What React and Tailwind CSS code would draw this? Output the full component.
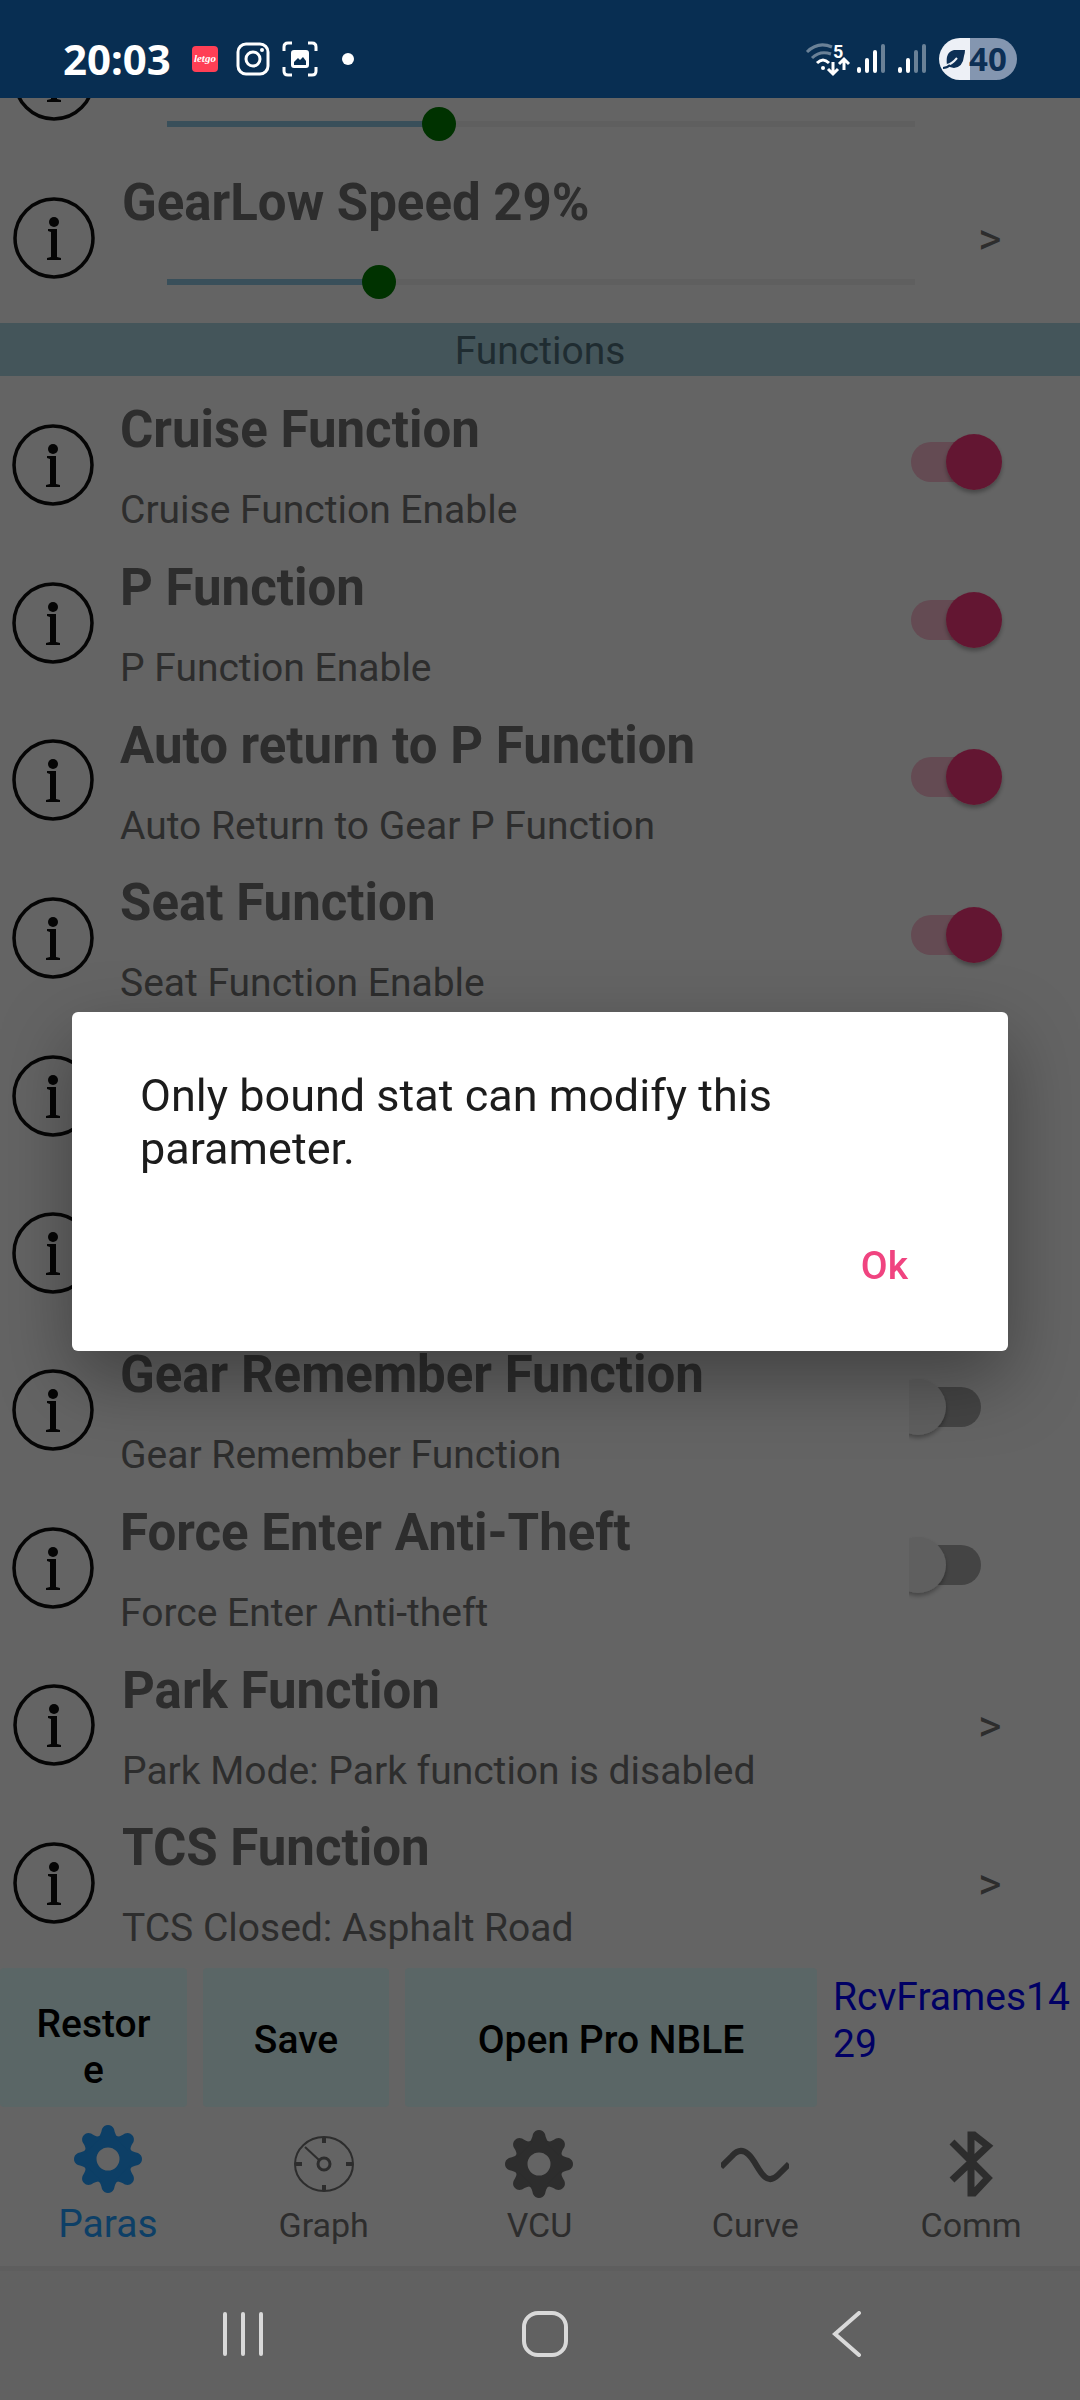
import React, { useState } from 'react';

const functions = [
  { title: 'Cruise Function', detail: 'Cruise Function Enable', on: true },
  { title: 'P Function', detail: 'P Function Enable', on: true },
  { title: 'Auto return to P Function', detail: 'Auto Return to Gear P Function', on: true },
  { title: 'Seat Function', detail: 'Seat Function Enable', on: true },
  { blank: true },
  { blank: true },
  { title: 'Gear Remember Function', detail: 'Gear Remember Function', on: false },
  { title: 'Force Enter Anti-Theft', detail: 'Force Enter Anti-theft', on: false },
  { title: 'Park Function', detail: 'Park Mode: Park function is disabled', link: true },
  { title: 'TCS Function', detail: 'TCS Closed: Asphalt Road', link: true },
];

function InfoIcon() {
  return (
    <svg viewBox="0 0 82 82" className="w-[82px] h-[82px]" fill="none">
      <circle cx="41" cy="41" r="39" stroke="#050505" strokeWidth="3.500" />
      <circle cx="41" cy="25" r="5" fill="#050505" />
      <path d="M35 32h9v28l4 1v2H34v-2l4-1V35l-3-1z" fill="#050505" />
    </svg>
  );
}

function Row({ title, children, right, wide }) {
  return (
    <div className="flex-1 min-h-[157px] flex">
      <div className={wide ? 'w-[122px] shrink-0 pl-[13px] flex items-center' : 'w-[120px] shrink-0 pl-3 flex items-center'}>
        <button type="button" aria-label="Info"><InfoIcon /></button>
      </div>
      <div className="flex-1 pt-[14px]">
        <h2 className="h-[60px] text-[51px] leading-[60px] font-bold whitespace-nowrap">{title}</h2>
        {children}
      </div>
      {right}
    </div>
  );
}

function Arrow() {
  return (
    <button type="button" aria-label="Open" className="w-[102px] text-left text-[45px] leading-[48px] pt-0.5">
      &gt;
    </button>
  );
}

function Speed({ value, onChange, label }) {
  const fill = ((value - 1) / 99) * 100;
  return (
    <div className="grid items-center h-[34px] mt-8 ml-7 mr-[46px]">
      <div className="[grid-area:1/1] mx-[17px] h-1.5 bg-[#5f5f5f]">
        <div className="h-full bg-[#394f5a]" style={{ width: `${fill}%` }} />
      </div>
      <input
        type="range"
        min="1"
        max="100"
        aria-label={label}
        value={value}
        onChange={(e) => onChange(Number(e.target.value))}
        className="[grid-area:1/1] w-full h-[34px] appearance-none bg-transparent [&::-webkit-slider-thumb]:appearance-none [&::-webkit-slider-thumb]:w-[34px] [&::-webkit-slider-thumb]:h-[34px] [&::-webkit-slider-thumb]:rounded-full [&::-webkit-slider-thumb]:bg-[#003200]"
      />
    </div>
  );
}

function Switch({ label, defaultOn }) {
  const [on, setOn] = useState(defaultOn);
  return (
    <label className="w-[171px] shrink-0 flex items-center pb-1.5">
      <input
        type="checkbox"
        role="switch"
        aria-label={label}
        checked={on}
        onChange={() => setOn(!on)}
        className="peer sr-only"
      />
      <svg viewBox="0 0 100 76" className="w-[100px] h-[76px] overflow-hidden">
        <defs>
          <filter id="knob" x="-30%" y="-30%" width="160%" height="160%">
            <feDropShadow dx="0" dy="3" stdDeviation="2" floodColor="#000" floodOpacity="0.3" />
          </filter>
        </defs>
        <rect x="2" y="18" width={on ? 80 : 70} height="40" rx="20" fill={on ? '#644b53' : '#444444'} />
        <circle cx={on ? 65 : 9} cy="38" r="28" fill={on ? '#641932' : '#5f5f5f'} filter="url(#knob)" />
      </svg>
    </label>
  );
}

const teeth = [0, 45, 90, 135, 180, 225, 270, 315];

function Gear() {
  return (
    <svg viewBox="-34 -34 68 68" className="w-[68px] h-[68px]" fill="currentColor">
      <circle r="18" fill="none" stroke="currentColor" strokeWidth="13" />
      {teeth.map((angle) => (
        <path key={angle} d="M-11-20Q-7-24-6-30Q-4-34 0-34Q4-34 6-30Q7-24 11-20Z" transform={`rotate(${angle})`} />
      ))}
    </svg>
  );
}

function Gauge() {
  return (
    <svg viewBox="0 0 68 68" className="w-[68px] h-[68px]" fill="none" stroke="currentColor" strokeWidth="2">
      <ellipse cx="34" cy="34" rx="29" ry="27" />
      <circle cx="34" cy="34" r="6" strokeWidth="3" />
      <path d="M29 30L15 17" />
      <path d="M34 7v6M34 55v6M6 34h6M56 34h6" strokeWidth="4" />
    </svg>
  );
}

function Wave() {
  return (
    <svg viewBox="0 0 68 68" className="w-[68px] h-[68px]" fill="none" stroke="currentColor" strokeWidth="6">
      <path d="M0 37L11 26Q19 17 27 24C34 30 37 41 44 47Q50 52 57 45L68 34" />
    </svg>
  );
}

function Bluetooth() {
  return (
    <svg viewBox="0 0 68 68" className="w-[68px] h-[68px]" fill="none" stroke="currentColor" strokeWidth="7">
      <path d="M15 12L51 48L37 63L34 63V5H37L51 16L15 50" />
    </svg>
  );
}

const tabs = [
  { name: 'Paras', icon: Gear },
  { name: 'Graph', icon: Gauge },
  { name: 'VCU', icon: Gear },
  { name: 'Curve', icon: Wave },
  { name: 'Comm', icon: Bluetooth },
];

function StatusBar() {
  return (
    <header className="relative z-10 h-[98px] shrink-0 bg-[#082e52] text-white flex items-center justify-between px-[63px] pt-5">
      <div className="flex items-center">
        <span className="font-['Noto_Sans',sans-serif] font-bold text-[42px] leading-10 mr-[21px]">20:03</span>
        <span className="w-[26px] h-[26px] mr-[18px] rounded bg-[#ff3f55] font-['Liberation_Serif',serif] italic font-bold text-[11px] leading-[24px] text-center">letgo</span>
        <svg viewBox="0 0 34 34" className="w-[34px] h-[34px] mr-3" fill="none" stroke="currentColor" strokeWidth="3">
          <rect x="2" y="2" width="30" height="30" rx="8" />
          <circle cx="17" cy="17" r="7" />
          <circle cx="26" cy="8" r="2" fill="currentColor" stroke="none" />
        </svg>
        <svg viewBox="0 0 36 36" className="w-9 h-9 mr-6" fill="none" stroke="currentColor" strokeWidth="3">
          <path d="M2 10V6q0-4 4-4h4M26 2h4q4 0 4 4v4M34 26v4q0 4-4 4h-4M10 34H6q-4 0-4-4v-4" />
          <path fillRule="evenodd" fill="currentColor" stroke="none" d="M12 9h12q3 0 3 3v12q0 3-3 3H12q-3 0-3-3V12q0-3 3-3ZM12 24h12v-4l-3-4-3 3-2-2-4 4Z" />
        </svg>
        <span className="w-3 h-3 rounded-full bg-white" />
      </div>
      <div className="flex items-center">
        <svg viewBox="0 0 44 34" className="w-11 h-[34px] mr-2 overflow-visible" fill="none" stroke="currentColor" strokeWidth="3">
          <path d="M2 10Q13-1 27 5M7 16Q15 8 26 12" opacity=".4" />
          <path d="M12 21Q18 15 24 21" />
          <circle cx="18" cy="26" r="2" fill="currentColor" stroke="none" />
          <text x="28" y="16" fontSize="18" fontWeight="700" fill="currentColor" stroke="none">5</text>
          <path d="M28 20v11M23 27l5 5 5-5M39 28V18M34 22l5-5 5 5" />
        </svg>
        <svg viewBox="0 0 28 32" className="w-7 h-8 mr-[13px]" fill="none" stroke="currentColor" strokeWidth="4" strokeLinecap="round">
          <path d="M2 26v2M10 17v11M18 9v19" />
          <path d="M26 3v25" opacity=".4" />
        </svg>
        <svg viewBox="0 0 28 32" className="w-7 h-8 mr-[13px]" fill="none" stroke="currentColor" strokeWidth="4" strokeLinecap="round">
          <path d="M2 26v2M10 17v11" />
          <path d="M18 9v19M26 3v25" opacity=".4" />
        </svg>
        <div className="w-[78px] h-[42px] rounded-full flex items-center bg-linear-to-r from-[#edf0f6] from-40% to-[#8496b0] to-40% text-[#0d2f55]">
          <svg viewBox="0 0 22 20" className="w-[22px] h-5 ml-1">
            <path d="M4 16Q2 3 11 1h11q0 3-1 6-1 11-10 12-4 0-7-3Z" fill="currentColor" />
            <path d="M4 16Q9 15 14 9" stroke="#edf0f6" strokeWidth="2" fill="none" />
            <path d="M0 19q4 0 7-3" stroke="currentColor" strokeWidth="2" fill="none" />
          </svg>
          <span className="ml-1 font-['Noto_Sans',sans-serif] font-bold text-[33px] leading-[42px]">40</span>
        </div>
      </div>
    </header>
  );
}

function SystemNav() {
  return (
    <nav className="h-[134px] shrink-0 bg-[#616161] border-t-[5px] border-[#5e5e5e] text-[#d9d9d9] pl-[92px] pr-[82px] pb-1 grid grid-cols-3 items-center justify-items-center">
      <button type="button" aria-label="Recent apps">
        <svg viewBox="0 0 44 46" className="w-11 h-[46px]" stroke="currentColor" strokeWidth="4" strokeLinecap="round">
          <path d="M4 3v40M22 3v40M40 3v40" />
        </svg>
      </button>
      <button type="button" aria-label="Home">
        <svg viewBox="0 0 46 46" className="w-[46px] h-[46px]" fill="none" stroke="currentColor" strokeWidth="4">
          <rect x="2" y="2" width="42" height="42" rx="14" />
        </svg>
      </button>
      <button type="button" aria-label="Back">
        <svg viewBox="0 0 30 46" className="w-[30px] h-[46px]" fill="none" stroke="currentColor" strokeWidth="4" strokeLinecap="round">
          <path d="M27 2L3 23L27 44" />
        </svg>
      </button>
    </nav>
  );
}

function Dialog({ onClose }) {
  return (
    <div className="fixed inset-0 z-20 px-[72px] pt-[98px] pb-[136px] flex items-center">
      <div role="alertdialog" aria-describedby="message" className="w-full rounded-md bg-white shadow-[0_28px_72px_rgba(0,0,0,0.35)] px-[68px] pt-[57px] pb-[61px]">
        <p id="message" className="text-[45px] leading-[53px] text-[#1c1c1c] max-w-[700px]">
          Only bound stat can modify this parameter.
        </p>
        <div className="mt-[67px] flex justify-end pr-8">
          <button type="button" onClick={onClose} className="text-[39px] leading-[48px] font-medium text-[#f04480]">Ok</button>
        </div>
      </div>
    </div>
  );
}

function App() {
  const [speeds, setSpeeds] = useState([37, 29]);
  const [dialogOpen, setDialogOpen] = useState(true);

  return (
    <div className="min-h-screen flex flex-col overflow-hidden bg-[#646464] text-[#2d2d2d] font-[Roboto,sans-serif]">
      <StatusBar />

      {/* --- PARAMETER LIST --- */}
      <main className="flex-1 flex flex-col -mt-[97px] pb-1.5">
        <div className="flex flex-col h-[316px]">
          <Row wide right={<div className="w-[102px]" />}>
            <Speed label="Speed" value={speeds[0]} onChange={(v) => setSpeeds([v, speeds[1]])} />
          </Row>
          <Row wide title={`GearLow Speed ${speeds[1]}%`} right={<Arrow />}>
            <Speed label="GearLow Speed" value={speeds[1]} onChange={(v) => setSpeeds([speeds[0], v])} />
          </Row>
        </div>
        <div className="mt-1.5 mb-2.5 h-[53px] pt-1 bg-[#44555a] text-[#1f2c31] text-center text-[39px] leading-[49px]">
          Functions
        </div>
        <div className="flex-1 flex flex-col">
          {functions.map((item, i) => (
            <Row
              key={i}
              title={item.title}
              wide={item.link}
              right={item.link ? <Arrow /> : !item.blank && <Switch label={item.title} defaultOn={item.on} />}
            >
              <p className="mt-[26px] text-[39px] leading-[48px] whitespace-nowrap">{item.detail}</p>
            </Row>
          ))}
        </div>
      </main>

      {/* --- ACTIONS --- */}
      <div className="h-[139px] shrink-0 grid grid-cols-[187fr_186fr_412fr_247fr] gap-x-4 text-[39px] leading-[46px] font-medium text-black">
        <button type="button" className="bg-[#5a6666] rounded px-8 pt-[18px] break-all">Restore</button>
        <button type="button" className="bg-[#5a6666] rounded pt-1">Save</button>
        <button type="button" className="bg-[#5a6666] rounded pt-1">Open Pro NBLE</button>
        <p className="pt-1.5 leading-[47px] font-normal text-[#000064] break-all">RcvFrames1429</p>
      </div>

      {/* --- TABS --- */}
      <nav className="h-[159px] shrink-0 pr-px grid grid-cols-5">
        {tabs.map(({ name, icon: Icon }, i) => (
          <button
            key={name}
            type="button"
            className={i === 0 ? 'flex flex-col items-center justify-end pb-[19px] text-[#0d3f66]' : 'flex flex-col items-center justify-end pb-5'}
          >
            <Icon />
            <span className={i === 0 ? 'mt-2 text-[39px] leading-[46px]' : 'mt-1.5 text-[34px] leading-[42px]'}>{name}</span>
          </button>
        ))}
      </nav>

      <SystemNav />
      {dialogOpen && <Dialog onClose={() => setDialogOpen(false)} />}
    </div>
  );
}

export default App;
